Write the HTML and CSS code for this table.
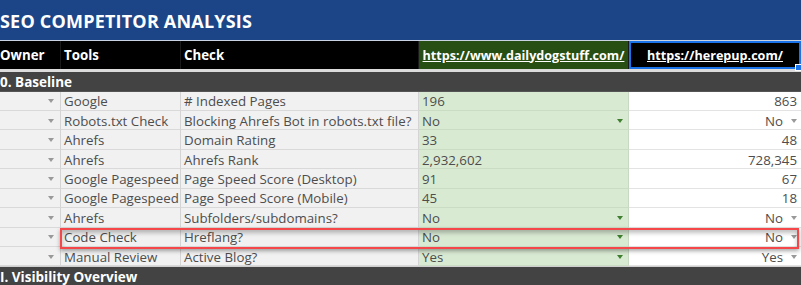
FILE: index.html
```html
<!DOCTYPE html>
<html>
<head>
<meta charset="utf-8">
<link rel="stylesheet" href="styles.css">
</head>
<body>
<div class="sheet">
  <div class="title">SEO COMPETITOR ANALYSIS</div>
  <div class="row head">
    <div class="c">Owner</div>
    <div class="c">Tools</div>
    <div class="c">Check</div>
    <div class="c url green-h"><span>https://www.dailydogstuff.com/</span></div>
    <div class="c url selected"><span>https://herepup.com/</span><i class="handle"></i></div>
  </div>
  <div class="band"></div>
  <div class="section">0. Baseline</div>

  <div class="row data">
    <div class="c own"><i class="tri grey"></i></div>
    <div class="c">Google</div>
    <div class="c">#&nbsp;Indexed Pages</div>
    <div class="c g">196</div>
    <div class="c v">863</div>
  </div>
  <div class="row data">
    <div class="c own"><i class="tri grey"></i></div>
    <div class="c">Robots.txt Check</div>
    <div class="c">Blocking Ahrefs Bot in robots.txt file?</div>
    <div class="c g dd"><span>No</span><i class="tri green"></i></div>
    <div class="c v dd"><span>No</span><i class="tri grey"></i></div>
  </div>
  <div class="row data">
    <div class="c own"><i class="tri grey"></i></div>
    <div class="c">Ahrefs</div>
    <div class="c">Domain Rating</div>
    <div class="c g">33</div>
    <div class="c v">48</div>
  </div>
  <div class="row data">
    <div class="c own"><i class="tri grey"></i></div>
    <div class="c">Ahrefs</div>
    <div class="c">Ahrefs Rank</div>
    <div class="c g">2,932,602</div>
    <div class="c v">728,345</div>
  </div>
  <div class="row data">
    <div class="c own"><i class="tri grey"></i></div>
    <div class="c">Google Pagespeed</div>
    <div class="c">Page Speed Score (Desktop)</div>
    <div class="c g">91</div>
    <div class="c v">67</div>
  </div>
  <div class="row data">
    <div class="c own"><i class="tri grey"></i></div>
    <div class="c">Google Pagespeed</div>
    <div class="c">Page Speed Score (Mobile)</div>
    <div class="c g">45</div>
    <div class="c v">18</div>
  </div>
  <div class="row data">
    <div class="c own"><i class="tri grey"></i></div>
    <div class="c">Ahrefs</div>
    <div class="c">Subfolders/subdomains?</div>
    <div class="c g dd"><span>No</span><i class="tri green"></i></div>
    <div class="c v dd"><span>No</span><i class="tri grey"></i></div>
  </div>
  <div class="row data">
    <div class="c own"><i class="tri grey"></i></div>
    <div class="c">Code Check</div>
    <div class="c">Hreflang?</div>
    <div class="c g dd"><span>No</span><i class="tri green"></i></div>
    <div class="c v dd"><span>No</span><i class="tri grey"></i></div>
  </div>
  <div class="row data">
    <div class="c own"><i class="tri grey"></i></div>
    <div class="c">Manual Review</div>
    <div class="c">Active Blog?</div>
    <div class="c g dd"><span>Yes</span><i class="tri green"></i></div>
    <div class="c v dd"><span>Yes</span><i class="tri grey"></i></div>
  </div>
  <div class="section last">I. Visibility Overview</div>

  <div class="highlight"></div>
</div>
</body>
</html>
```
FILE: styles.css
```css
html, body {
  margin: 0;
  padding: 0;
  background: #ffffff;
}
.sheet {
  position: relative;
  width: 801px;
  height: 285px;
  overflow: hidden;
  font-family: "Open Sans", "Liberation Sans", sans-serif;
  font-size: 13.3px;
  color: #4d4d4d;
}
.title {
  box-sizing: border-box;
  border-bottom: 1px solid #c9d3e3;
  height: 41px;
  background: #1c4587;
  color: #ffffff;
  font-weight: 700;
  font-size: 18px;
  line-height: 42px;
  letter-spacing: 0.2px;
}
.row {
  display: grid;
  grid-template-columns: 61px 120px 238px 210px 172px;
}
.c {
  box-sizing: border-box;
  padding: 0 3px;
  white-space: nowrap;
  overflow: hidden;
  display: flex;
  align-items: center;
}
.head {
  height: 28px;
  background: #000000;
  color: #ffffff;
  font-weight: 700;
}
.head .c {
  border-right: 1px solid #1a1a1a;
}
.head .c:first-child {
  padding-left: 0;
}
.head .url {
  justify-content: center;
  text-decoration: underline;
  padding: 0;
  font-size: 12.6px;
}
.green-h {
  background: #274e13;
}
.selected {
  position: relative;
  overflow: visible;
  border: 2px solid #1a73e8;
  border-right: 2px solid #1a73e8 !important;
}
.handle {
  position: absolute;
  right: -3px;
  bottom: -4px;
  width: 5px;
  height: 5px;
  background: #1a73e8;
  border: 1px solid #ffffff;
}
.band {
  height: 3px;
  background: #dcdcdc;
}
.section {
  height: 19.5px;
  background: #434343;
  color: #ffffff;
  font-weight: 700;
  font-size: 13.5px;
  line-height: 20px;
  border-bottom: 1px solid #555555;
  box-sizing: border-box;
}
.section.last {
  height: 20px;
  border-top: 1px solid #cfcfcf;
}
.data {
  height: 19.45px;
  box-sizing: border-box;
}
.data .c {
  background: #f1f1f1;
  border-right: 1px solid #d4d4d4;
  border-bottom: 1px solid #d9d9d9;
  padding-top: 1px;
}
.data .c.g {
  background: #d9ead3;
  border-right: 1px solid #c9d8c3;
  border-bottom: 1px solid #cbdcc5;
}
.data .c.v {
  background: #ffffff;
  border-right: none;
  border-bottom: 1px solid #e3e3e3;
  justify-content: flex-end;
  padding-right: 4px;
}
.data .c.own {
  justify-content: flex-end;
  padding-right: 6px;
}
.dd.g {
  justify-content: space-between;
  padding-right: 5px;
}
.dd.v {
  padding-right: 7px;
}
.dd.v .tri {
  margin-left: 8px;
}
.tri {
  display: block;
  width: 0;
  height: 0;
  border-left: 3.5px solid transparent;
  border-right: 3.5px solid transparent;
  border-top: 4px solid #999999;
}
.tri.green {
  border-top-color: #3f7f2f;
}
.highlight {
  position: absolute;
  left: 60px;
  top: 228px;
  width: 739px;
  height: 21px;
  box-sizing: border-box;
  border: 2px solid #f5474a;
  box-shadow: 0 2px 4px rgba(0, 0, 0, 0.35), inset 0 3px 4px rgba(0, 0, 0, 0.25);
  pointer-events: none;
}
```
